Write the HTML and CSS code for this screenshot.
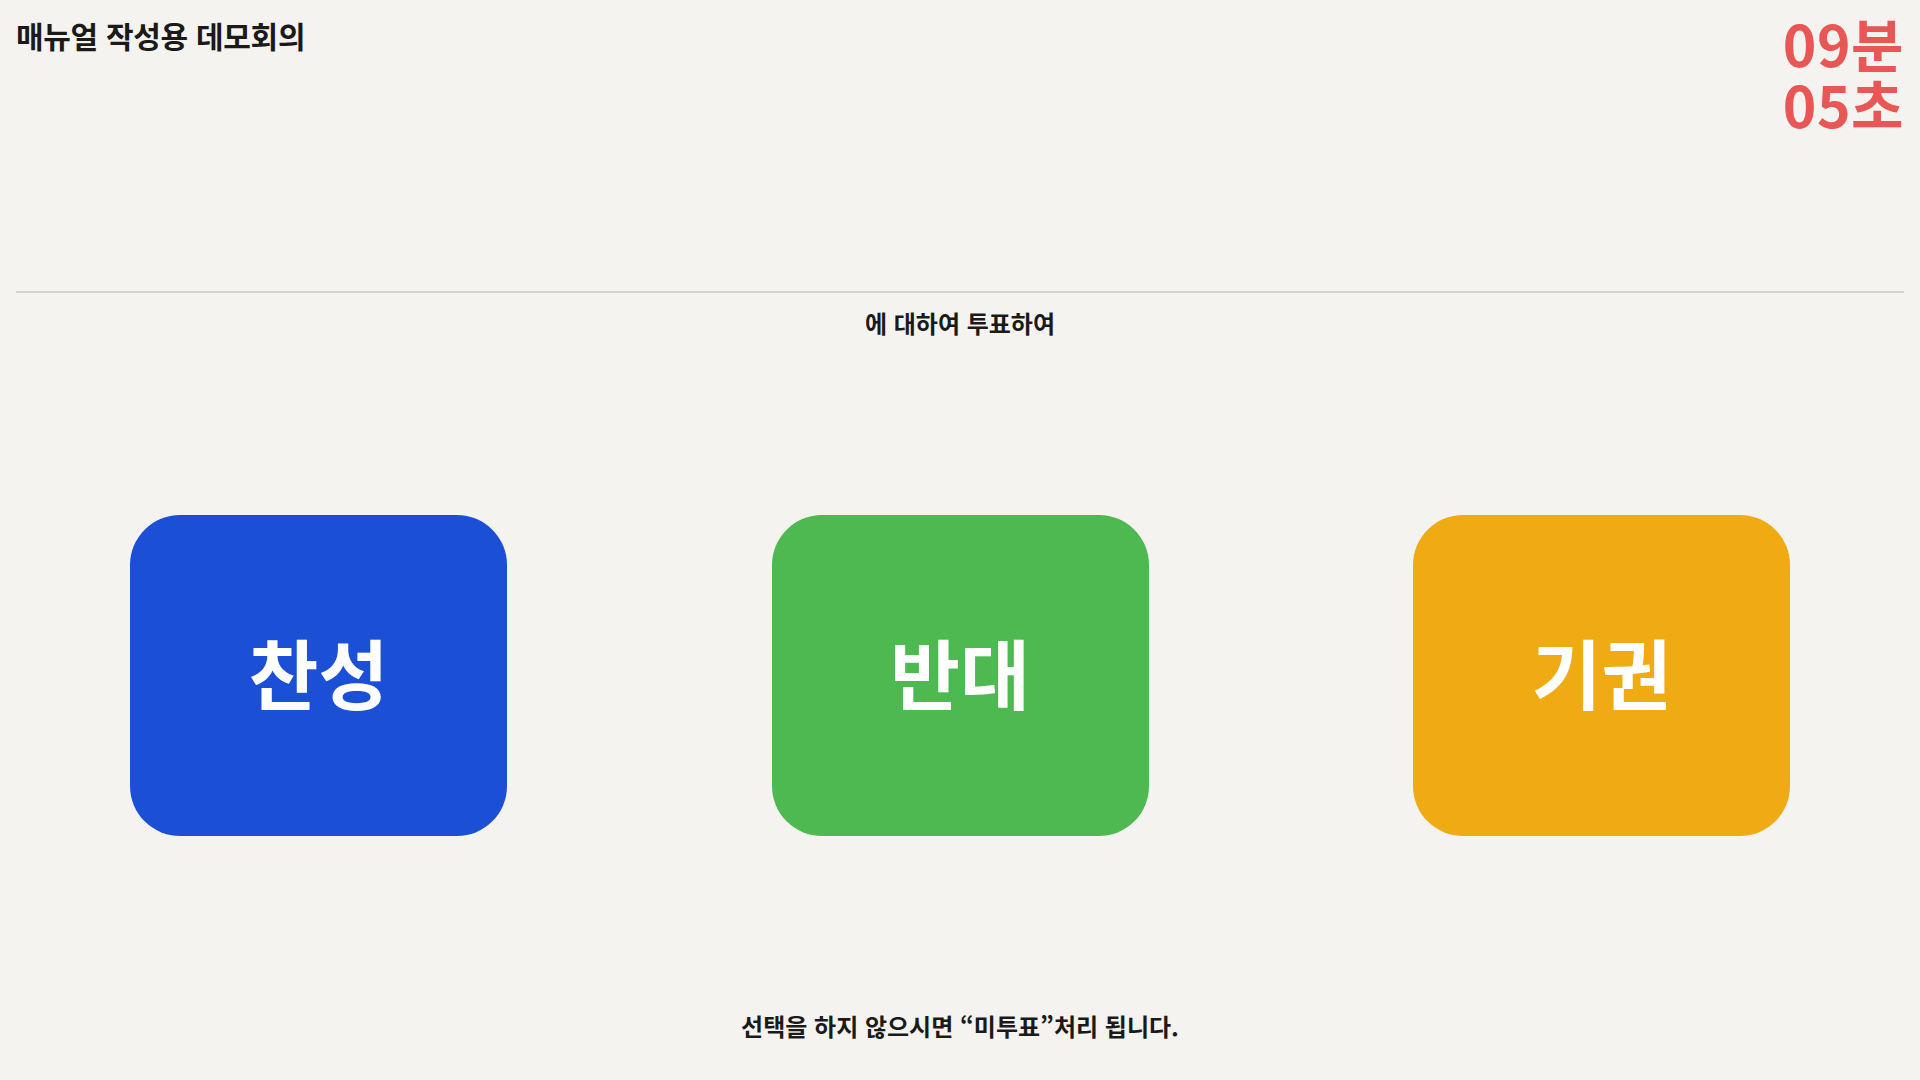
FILE: index.html
```html
<!DOCTYPE html>
<html lang="ko">
<head>
<meta charset="utf-8">
<title>투표</title>
<link rel="stylesheet" href="styles.css">
</head>
<body>
<div class="page">
  <header class="top">
    <h1 class="title">매뉴얼 작성용 데모회의</h1>
    <div class="timer">09분<br>05초</div>
  </header>
  <p class="subtitle">에 대하여 투표하여</p>
  <main class="votes">
    <button class="vote vote-yes" type="button">찬성</button>
    <button class="vote vote-no" type="button">반대</button>
    <button class="vote vote-abstain" type="button">기권</button>
  </main>
  <p class="notice">선택을 하지 않으시면 “미투표”처리 됩니다.</p>
</div>
</body>
</html>
```
FILE: styles.css
```css
* { box-sizing: border-box; }
html, body {
  margin: 0;
  padding: 0;
  height: 100%;
  background: #f4f3ef;
}
body {
  font-family: "Noto Sans CJK KR", "Noto Sans", sans-serif;
  color: #1a1a1a;
}
.page {
  height: 100vh;
  display: flex;
  flex-direction: column;
  padding: 0 16px;
}
.top {
  height: 293px;
  flex: none;
  display: flex;
  justify-content: space-between;
  align-items: flex-start;
  border-bottom: 2px solid #d4d4d2;
}
.title {
  margin: 15px 0 0 0;
  font-size: 30px;
  font-weight: 700;
  line-height: 40px;
  letter-spacing: -0.3px;
}
.timer {
  margin-top: 12px;
  text-align: right;
  color: #e85656;
  font-weight: 700;
  font-size: 57px;
  line-height: 61px;
  letter-spacing: 0.5px;
}
.subtitle {
  margin: 14px 0 0;
  text-align: center;
  font-size: 24px;
  font-weight: 700;
  line-height: 32px;
}
.votes {
  flex: 1;
  display: flex;
  justify-content: space-between;
  align-items: center;
  padding: 0 114px;
}
.vote {
  width: 377px;
  height: 321px;
  border: none;
  border-radius: 50px;
  color: #ffffff;
  font-family: "Noto Sans CJK KR", "Noto Sans", sans-serif;
  font-size: 76px;
  font-weight: 700;
  cursor: pointer;
  padding: 0 0 8px;
}
.vote-yes { background: #1b50d6; }
.vote-no { background: #4db950; }
.vote-abstain { background: #f0aa14; }
.notice {
  margin: 0 0 39px;
  text-align: center;
  font-size: 24px;
  font-weight: 700;
  line-height: 30px;
}
```
